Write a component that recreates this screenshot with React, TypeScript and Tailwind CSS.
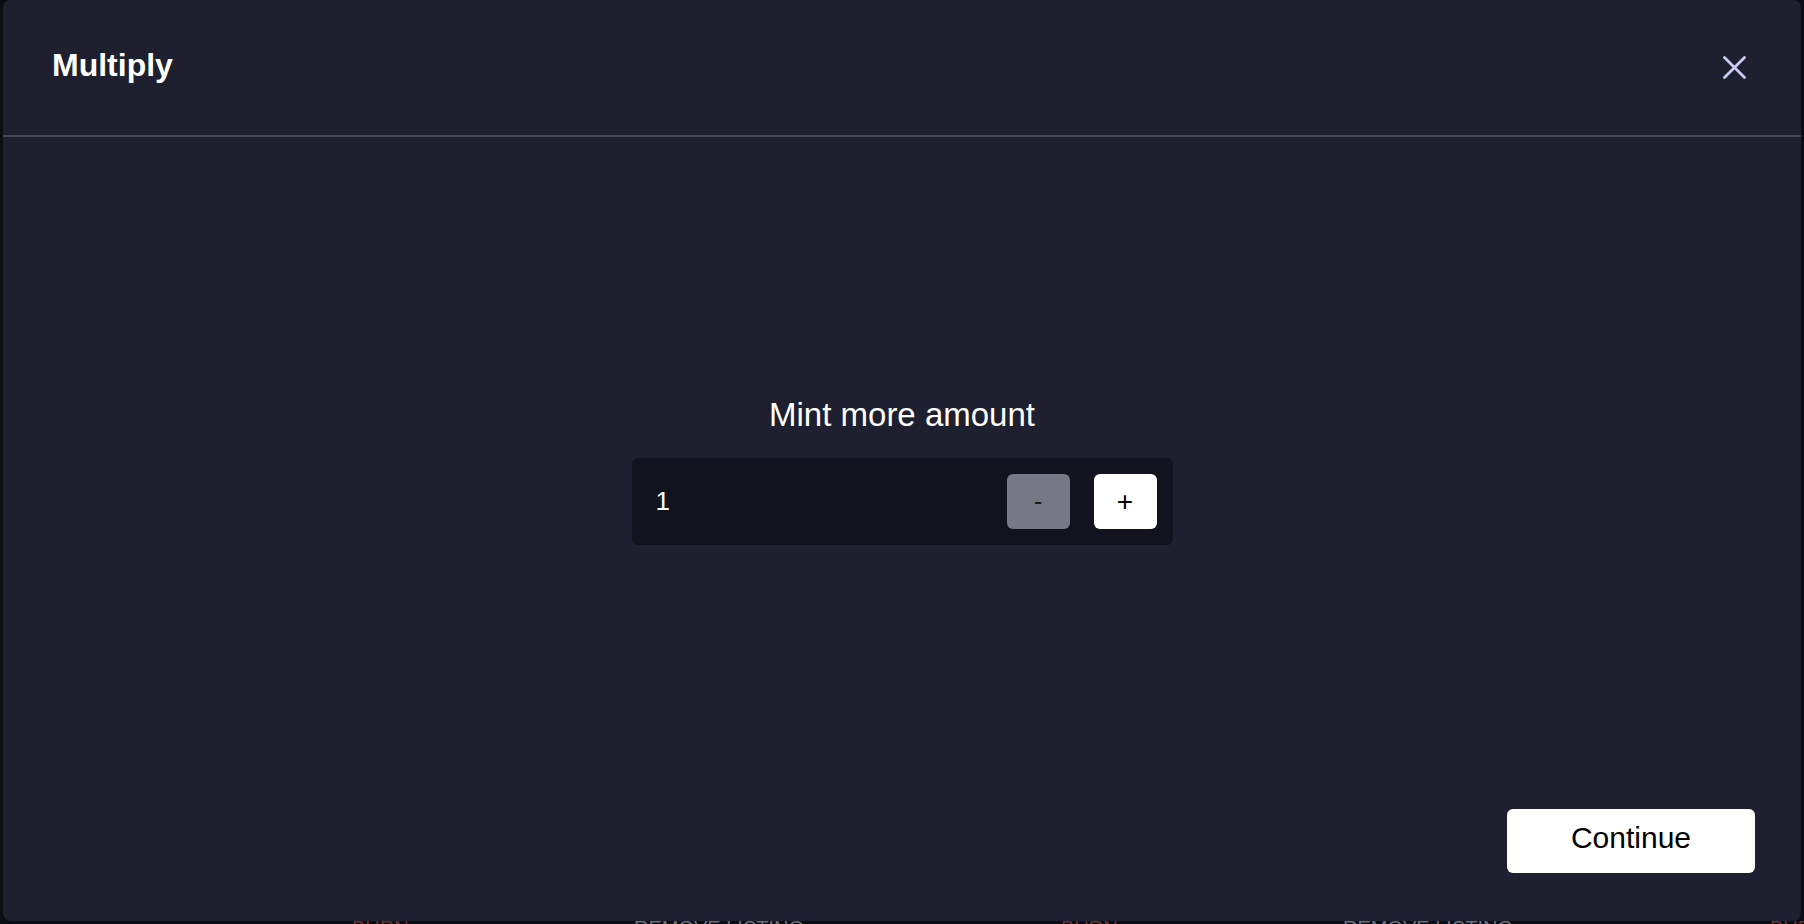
import { useState } from "react";

const font = { fontFamily: '"Liberation Sans", Arial, sans-serif' };

const BgRow = () => {
    // faint page behind the modal; only the tops of these labels peek out
    const cells = [0, 1, 2];
    return (
        <div className="flex pt-[918px] pl-[352px] leading-[20px] text-[20px] uppercase">
            {cells.map((i) => (
                <div key={i} className="flex w-[709px] shrink-0">
                    <span className="w-[282px] text-[#6b2e2b]">Burn</span>
                    <span className="text-[#6a6d78]">Remove Listing</span>
                </div>
            ))}
        </div>
    );
};

const App = () => {
    const [amount, setAmount] = useState<number>(1);

    return (
        <div className="relative h-screen w-full overflow-hidden bg-[#0c0d12]" style={font}>
            <BgRow />

            <div className="absolute left-[3px] top-0 flex h-[921px] w-[1798px] flex-col rounded-lg bg-[#1e1f2f]">
                <div className="flex h-[137px] shrink-0 items-center justify-between border-b-2 border-[#464757] pl-[49px] pr-[55px] pb-[6px]">
                    <h2 className="text-[32px] font-bold leading-[40px] text-white">Multiply</h2>
                    <button type="button" className="mt-[5px] flex h-[23px] w-[23px] items-center justify-center">
                        <svg width="23" height="23" viewBox="0 0 23 23" fill="none">
                            <path d="M1.5 1.5 L21.5 21.5 M21.5 1.5 L1.5 21.5" stroke="#c6ccf3" strokeWidth="2.8" strokeLinecap="round" />
                        </svg>
                    </button>
                </div>

                <div className="flex flex-1 flex-col items-center justify-center pb-[6px]">
                    <h3 className="mb-[23px] text-[33px] leading-[40px] text-white">Mint more amount</h3>
                    <div className="flex h-[87px] w-[541px] items-center rounded-md bg-[#11131f] pl-[24px] pr-[16px]">
                        <span className="flex-1 text-[26px] text-white">{amount}</span>
                        <button
                            type="button"
                            onClick={() => setAmount(Math.max(1, amount - 1))}
                            className="flex h-[55px] w-[63px] items-center justify-center rounded-md bg-[#767985] text-[26px] text-[#1b1c24]"
                        >
                            -
                        </button>
                        <button
                            type="button"
                            onClick={() => setAmount(amount + 1)}
                            className="ml-[24px] flex h-[55px] w-[63px] items-center justify-center rounded-md bg-white text-[28px] text-black"
                        >
                            +
                        </button>
                    </div>
                </div>

                <div className="flex shrink-0 justify-end pr-[46px] pb-[48px]">
                    <button type="button" className="h-[64px] w-[248px] rounded-md bg-white pb-[7px] text-[30px] text-black">
                        Continue
                    </button>
                </div>
            </div>
        </div>
    );
};

export default App;
